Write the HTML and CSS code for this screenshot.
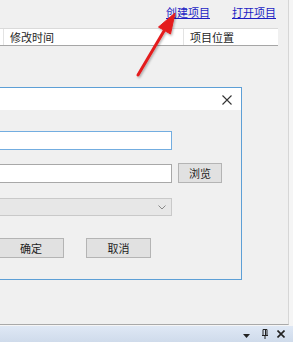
FILE: index.html
```html
<!DOCTYPE html>
<html lang="zh-CN">
<head>
    <meta charset="UTF-8">
    <meta name="viewport" content="width=device-width, initial-scale=1.0">
    <title>项目管理</title>
    <link rel="stylesheet" href="styles.css">
</head>
<body>
    <div class="app">
        <div class="pane">
            <div class="toolbar">
                <a href="#" class="link">创建项目</a>
                <a href="#" class="link">打开项目</a>
            </div>
            <div class="list-head">
                <div class="cell cell-stub"></div>
                <div class="cell cell-time">修改时间</div>
                <div class="cell cell-path">项目位置</div>
            </div>
        </div>
        <div class="dock-bar">
            <svg class="dock-icon dock-menu" width="7" height="4" viewBox="0 0 7 4"><path d="M0 0h7L3.5 4z" fill="#222"/></svg>
            <svg class="dock-icon dock-pin" width="6" height="10" viewBox="0 0 6 10"><path d="M1 0.5h4v6h-4zM0 6.5h6M3 6.5v3.5" fill="none" stroke="#222" stroke-width="1"/><path d="M3.5 1v5" stroke="#222" stroke-width="1"/></svg>
            <svg class="dock-icon dock-close" width="8" height="8" viewBox="0 0 8 8"><path d="M0.5 0.5l7 7M7.5 0.5l-7 7" stroke="#222" stroke-width="1.6"/></svg>
        </div>
    </div>

    <div class="dialog">
        <div class="dialog-title">
            <svg class="close" width="10" height="10" viewBox="0 0 10 10"><path d="M0.5 0.5l9 9M9.5 0.5l-9 9" stroke="#333" stroke-width="1.1"/></svg>
        </div>
        <div class="dialog-body">
            <div class="row">
                <input type="text" class="field field-focus">
            </div>
            <div class="row row-browse">
                <input type="text" class="field">
                <button class="btn btn-browse">浏览</button>
            </div>
            <div class="row">
                <div class="select">
                    <svg width="8" height="5" viewBox="0 0 8 5"><path d="M0.5 0.5l3.5 3.5 3.5-3.5" fill="none" stroke="#888" stroke-width="1"/></svg>
                </div>
            </div>
            <div class="row row-actions">
                <button class="btn btn-ok">确定</button>
                <button class="btn btn-cancel">取消</button>
            </div>
        </div>
    </div>

    <svg class="arrow" width="293" height="342" viewBox="0 0 293 342">
        <defs>
            <filter id="shade" x="-20%" y="-20%" width="140%" height="140%">
                <feDropShadow dx="1" dy="1.5" stdDeviation="1" flood-color="#000" flood-opacity="0.3"/>
            </filter>
        </defs>
        <g filter="url(#shade)" fill="#e41b1f" stroke="#e41b1f">
            <line x1="138" y1="75" x2="164" y2="31" stroke-width="3" stroke-linecap="round"/>
            <polygon points="175,13 170.5,34 158.5,27" stroke-width="1" stroke-linejoin="round"/>
        </g>
    </svg>
</body>
</html>
```

FILE: styles.css
```css
body {
    margin: 0;
    padding: 0;
    background: #f0f0f0;
    font-family: "Noto Sans CJK SC", "Microsoft YaHei", sans-serif;
    font-size: 11px;
    color: #1e1e1e;
    overflow: hidden;
}
.app {
    width: 293px;
    height: 342px;
    background: #f5f5f5;
}
.pane {
    width: 288px;
    height: 324px;
    background: #f0f0f0;
    border-right: 1px solid #d6d6d6;
    border-bottom: 1px solid #a9a9a9;
}
.toolbar {
    height: 28px;
    display: flex;
    justify-content: flex-end;
    gap: 22px;
    padding-right: 12px;
    box-sizing: border-box;
    line-height: 16px;
    padding-top: 4px;
}
.link {
    color: #1d1dc4;
    text-decoration: underline;
    text-underline-offset: 1px;
}
.list-head {
    width: 278px;
    height: 18px;
    box-sizing: border-box;
    display: flex;
    background: #fff;
    border-top: 1px solid #dadada;
    border-bottom: 1px solid #a6a6a6;
}
.cell {
    line-height: 16px;
    box-sizing: border-box;
    padding-left: 6px;
}
.cell-stub {
    width: 4px;
    padding: 0;
    border-right: 1px solid #e3e3e3;
}
.cell-time {
    width: 180px;
    border-right: 1px solid #e3e3e3;
}
.cell-path {
    flex: 1;
}
.dock-bar {
    margin-top: 1px;
    height: 16px;
    background: linear-gradient(#dfe8f5, #cfdbeb);
    display: flex;
    justify-content: flex-end;
    align-items: center;
    padding-right: 8px;
    box-sizing: border-box;
}
.dock-icon {
    display: block;
}
.dock-menu {
    margin-top: 3px;
}
.dock-pin {
    margin-left: 12px;
}
.dock-close {
    margin-left: 9px;
}
.dialog {
    position: absolute;
    left: -60px;
    top: 87px;
    width: 302px;
    height: 193px;
    box-sizing: border-box;
    border: 1px solid #5d9fd6;
    background: #f0f0f0;
}
.dialog-title {
    height: 22px;
    background: #fff;
    display: flex;
    justify-content: flex-end;
    align-items: center;
    padding-right: 9px;
}
.close {
    display: block;
    margin-top: 1px;
}
.dialog-body {
    padding-left: 19px;
}
.row {
    display: flex;
    align-items: center;
}
.field {
    width: 212px;
    height: 19px;
    box-sizing: border-box;
    margin: 0;
    border: 1px solid #a8a8a8;
    background: #fff;
    font: inherit;
    outline: none;
}
.field-focus {
    border-color: #73ade0;
}
.row:first-child {
    margin-top: 21px;
}
.row-browse {
    margin-top: 13px;
    height: 20px;
}
.btn {
    box-sizing: border-box;
    margin: 0;
    padding: 0;
    border: 1px solid #b4b4b4;
    background: #e1e1e1;
    font: inherit;
    color: #1e1e1e;
    height: 20px;
    line-height: 17px;
}
.btn-browse {
    margin-left: 6px;
    width: 44px;
}
.select {
    margin-top: 15px;
    width: 212px;
    height: 18px;
    box-sizing: border-box;
    border: 1px solid #c9c9c9;
    background: #e7e7e7;
    display: flex;
    justify-content: flex-end;
    align-items: center;
    padding-right: 5px;
}
.select svg {
    display: block;
}
.row-actions {
    margin-top: 22px;
    gap: 22px;
}
.btn-ok {
    margin-left: 38px;
    width: 66px;
}
.btn-cancel {
    width: 65px;
}
.arrow {
    position: absolute;
    left: 0;
    top: 0;
    pointer-events: none;
}
```
